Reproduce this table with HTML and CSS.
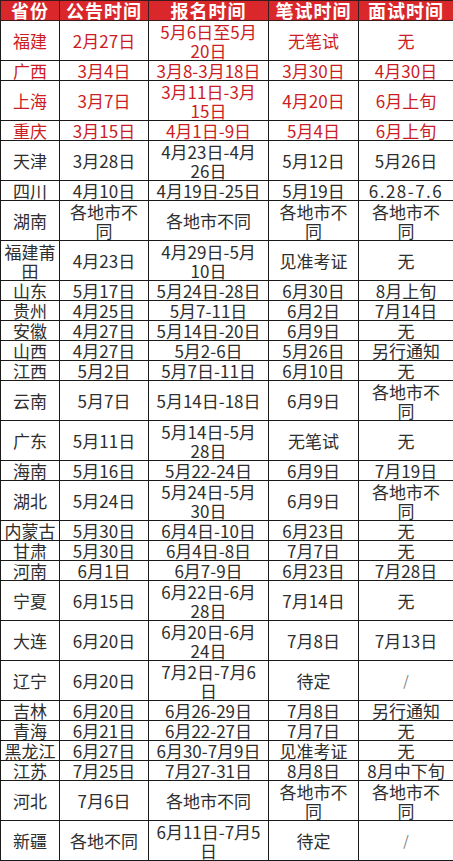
FILE: index.html
```html
<!DOCTYPE html>
<html lang="zh">
<head>
<meta charset="utf-8">
<link rel="stylesheet" href="styles.css">
</head>
<body>
<table class="sched">
<colgroup><col class="c1"><col class="c2"><col class="c3"><col class="c4"><col class="c5"></colgroup>
<thead>
<tr class="head"><th>省份</th><th>公告时间</th><th>报名时间</th><th>笔试时间</th><th>面试时间</th></tr>
</thead>
<tbody>
<tr class="dbl red"><td>福建</td><td>2月27日</td><td>5月6日至5月<br>20日</td><td>无笔试</td><td>无</td></tr>
<tr class="red"><td>广西</td><td>3月4日</td><td>3月8-3月18日</td><td>3月30日</td><td>4月30日</td></tr>
<tr class="dbl red"><td>上海</td><td>3月7日</td><td>3月11日-3月<br>15日</td><td>4月20日</td><td>6月上旬</td></tr>
<tr class="red"><td>重庆</td><td>3月15日</td><td>4月1日-9日</td><td>5月4日</td><td>6月上旬</td></tr>
<tr class="dbl"><td>天津</td><td>3月28日</td><td>4月23日-4月<br>26日</td><td>5月12日</td><td>5月26日</td></tr>
<tr><td>四川</td><td>4月10日</td><td>4月19日-25日</td><td>5月19日</td><td class="mono">6.28-7.6</td></tr>
<tr class="dbl"><td>湖南</td><td>各地市不<br>同</td><td>各地市不同</td><td>各地市不<br>同</td><td>各地市不<br>同</td></tr>
<tr class="dbl"><td>福建莆<br>田</td><td>4月23日</td><td>4月29日-5月<br>10日</td><td>见准考证</td><td>无</td></tr>
<tr><td>山东</td><td>5月17日</td><td>5月24日-28日</td><td>6月30日</td><td>8月上旬</td></tr>
<tr><td>贵州</td><td>4月25日</td><td>5月7-11日</td><td>6月2日</td><td>7月14日</td></tr>
<tr><td>安徽</td><td>4月27日</td><td>5月14日-20日</td><td>6月9日</td><td>无</td></tr>
<tr><td>山西</td><td>4月27日</td><td>5月2-6日</td><td>5月26日</td><td>另行通知</td></tr>
<tr><td>江西</td><td>5月2日</td><td>5月7日-11日</td><td>6月10日</td><td>无</td></tr>
<tr class="dbl"><td>云南</td><td>5月7日</td><td>5月14日-18日</td><td>6月9日</td><td>各地市不<br>同</td></tr>
<tr class="dbl"><td>广东</td><td>5月11日</td><td>5月14日-5月<br>28日</td><td>无笔试</td><td>无</td></tr>
<tr><td>海南</td><td>5月16日</td><td>5月22-24日</td><td>6月9日</td><td>7月19日</td></tr>
<tr class="dbl"><td>湖北</td><td>5月24日</td><td>5月24日-5月<br>30日</td><td>6月9日</td><td>各地市不<br>同</td></tr>
<tr><td>内蒙古</td><td>5月30日</td><td>6月4日-10日</td><td>6月23日</td><td>无</td></tr>
<tr><td>甘肃</td><td>5月30日</td><td>6月4日-8日</td><td>7月7日</td><td>无</td></tr>
<tr><td>河南</td><td>6月1日</td><td>6月7-9日</td><td>6月23日</td><td>7月28日</td></tr>
<tr class="dbl"><td>宁夏</td><td>6月15日</td><td>6月22日-6月<br>28日</td><td>7月14日</td><td>无</td></tr>
<tr class="dbl"><td>大连</td><td>6月20日</td><td>6月20日-6月<br>24日</td><td>7月8日</td><td>7月13日</td></tr>
<tr class="dbl"><td>辽宁</td><td>6月20日</td><td>7月2日-7月6<br>日</td><td>待定</td><td class="slash">/</td></tr>
<tr><td>吉林</td><td>6月20日</td><td>6月26-29日</td><td>7月8日</td><td>另行通知</td></tr>
<tr><td>青海</td><td>6月21日</td><td>6月22-27日</td><td>7月7日</td><td>无</td></tr>
<tr><td>黑龙江</td><td>6月27日</td><td>6月30-7月9日</td><td>见准考证</td><td>无</td></tr>
<tr><td>江苏</td><td>7月25日</td><td>7月27-31日</td><td>8月8日</td><td>8月中下旬</td></tr>
<tr class="dbl"><td>河北</td><td>7月6日</td><td>各地市不同</td><td>各地市不<br>同</td><td>各地市不<br>同</td></tr>
<tr class="dbl"><td>新疆</td><td>各地不同</td><td>6月11日-7月5<br>日</td><td>待定</td><td class="slash">/</td></tr>
</tbody>
</table>
</body>
</html>
```
FILE: styles.css
```css
html, body {
  margin: 0;
  padding: 0;
  background: #ffffff;
}

.sched {
  border-collapse: collapse;
  table-layout: fixed;
  width: 453px;
  font-family: "Noto Sans CJK SC", "Noto Sans", sans-serif;
  font-size: 17px;
  color: #2e2e2e;
}

.c1 { width: 59px; }
.c2 { width: 89px; }
.c3 { width: 120px; }
.c4 { width: 90px; }
.c5 { width: 95px; }

.sched th,
.sched td {
  border: 1px solid #1a1a1a;
  padding: 0;
  text-align: center;
  vertical-align: middle;
  line-height: 19px;
  height: 19px;
  white-space: nowrap;
}

.sched .head th {
  background: #d9272c;
  color: #ffffff;
  font-weight: bold;
  font-size: 18px;
  letter-spacing: 1px;
  border-color: #3a1a1a;
}

.sched .dbl td {
  height: 39px;
}

.sched .red td {
  color: #cc1c24;
}

.sched td.mono {
  letter-spacing: 1.5px;
}

.sched td.slash {
  color: #777777;
  font-size: 14px;
}
```
